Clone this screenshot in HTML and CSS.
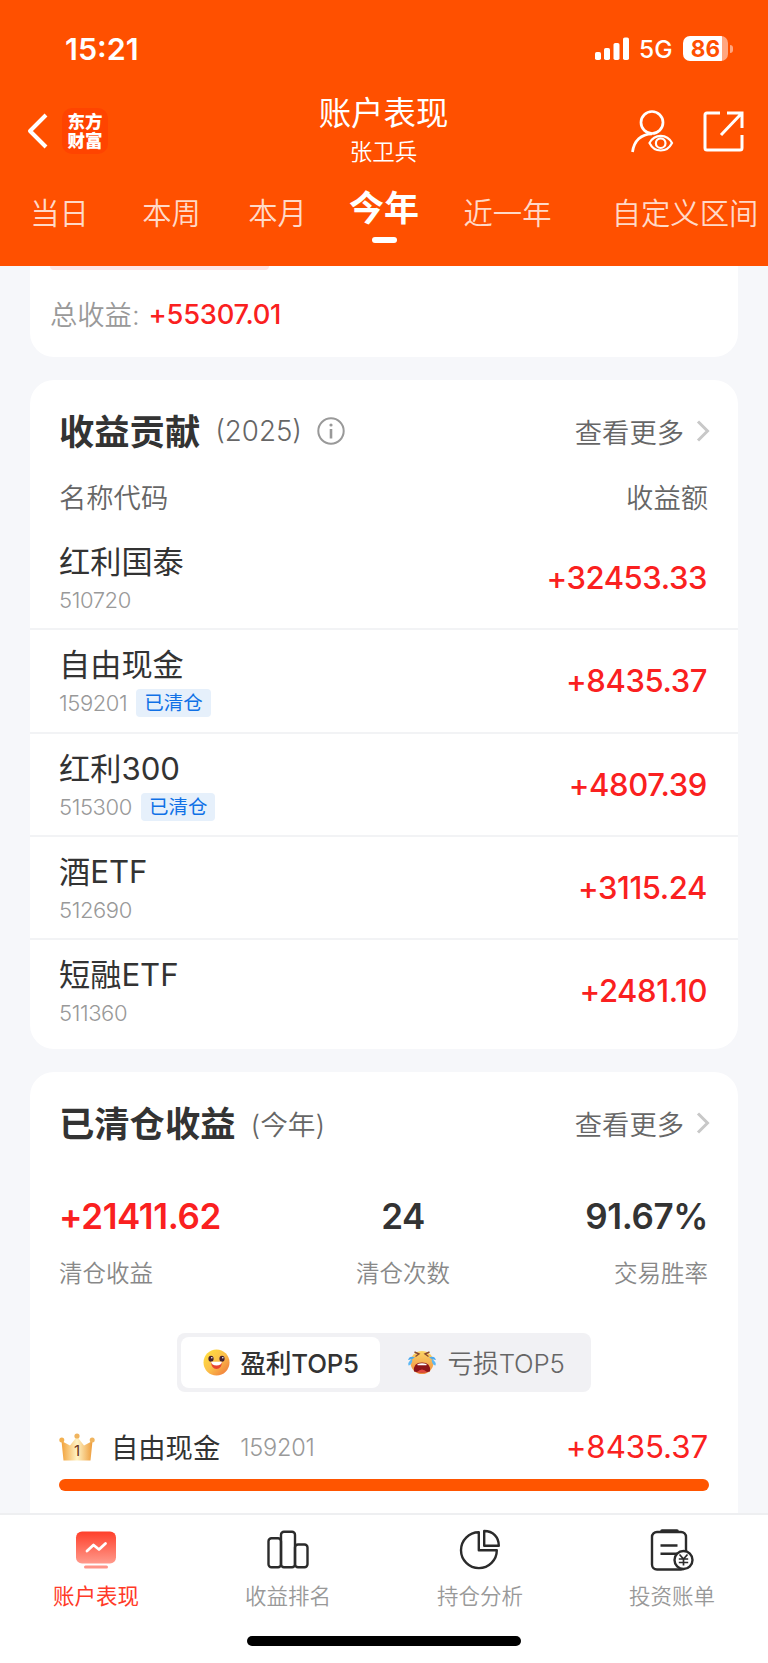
FILE: index.html
```html
<!DOCTYPE html>
<html lang="zh-CN">
<head>
    <meta charset="UTF-8">
    <meta name="viewport" content="width=device-width, initial-scale=1.0">
    <title>账户表现</title>
    <link rel="stylesheet" href="styles.css">
</head>
<body>
    <header class="header">
        <!-- 状态栏 -->
        <div class="status-bar">
            <span class="time">15:21</span>
            <div class="status-right">
                <svg class="signal" width="34" height="23" viewBox="0 0 34 23" fill="#fff">
                    <rect x="0" y="15" width="6" height="8" rx="1.8"/>
                    <rect x="9" y="11" width="6" height="12" rx="1.8"/>
                    <rect x="18.500" y="6" width="6" height="17" rx="1.800"/>
                    <rect x="28" y="0.500" width="6" height="22.500" rx="1.800"/>
                </svg>
                <span class="network">5G</span>
                <div class="battery"><span>86</span></div>
                <i class="battery-cap"></i>
            </div>
        </div>

        <!-- 标题栏 -->
        <div class="nav">
            <div class="nav-left">
                <svg width="22" height="36" viewBox="0 0 22 36" fill="none" stroke="#fff" stroke-width="4">
                    <path d="M19 2 L3 18 L19 34" stroke-linejoin="round"/>
                </svg>
                <div class="logo">东方<br>财富</div>
            </div>
            <div class="nav-title">
                <h1>账户表现</h1>
                <p>张卫兵</p>
            </div>
            <div class="nav-right">
                <svg width="44" height="44" viewBox="0 0 44 44" fill="none" stroke="#fff" stroke-width="2.700">
                    <circle cx="22" cy="13.500" r="11"/>
                    <path d="M2.500 43 C4 32 11 25 22 24.800"/>
                    <path d="M19.500 34 C24.500 24.500 37 24.500 42 34 C37 44 24.500 44 19.500 34 Z" stroke-width="2.200"/>
                    <circle cx="30.700" cy="34.200" r="4.800" stroke-width="2.200"/>
                </svg>
                <svg width="41" height="41" viewBox="0 0 41 41" fill="none" stroke="#fff" stroke-width="3">
                    <path d="M17 2 H4 Q2 2 2 4 V37 Q2 39 4 39 H37 Q39 39 39 37 V24"/>
                    <path d="M24 2 H39 V17 M38 3 L18 24"/>
                </svg>
            </div>
        </div>

        <!-- 时间区间 -->
        <nav class="range-tabs">
            <span>当日</span>
            <span>本周</span>
            <span>本月</span>
            <span class="active">今年</span>
            <span>近一年</span>
            <span>自定义区间</span>
        </nav>
    </header>

    <main class="content">
        <section class="card card-total">
            <div class="pink-pill"></div>
            <div class="total"><span>总收益:</span><b>+55307.01</b></div>
        </section>

        <!-- 收益贡献 -->
        <section class="card card-contrib">
            <div class="card-head">
                <h2>收益贡献</h2>
                <span class="sub year">(2025)</span>
                <svg class="info" width="28" height="28" viewBox="0 0 28 28" fill="none" stroke="#999">
                    <circle cx="14" cy="14" r="12.700" stroke-width="2"/>
                    <path d="M14 12 V21.500" stroke-width="2.600"/>
                    <circle cx="14" cy="8" r="1.600" fill="#999" stroke="none"/>
                </svg>
                <a class="more">查看更多
                    <svg width="14" height="22" viewBox="0 0 14 22" fill="none" stroke="#c8c8c8" stroke-width="3"><path d="M2 1.500 L11.500 11 L2 20.500"/></svg>
                </a>
            </div>
            <div class="table-head"><span>名称代码</span><span>收益额</span></div>
            <ul class="list">
                <li>
                    <div><h3>红利国泰</h3><p>510720</p></div>
                    <strong>+32453.33</strong>
                </li>
                <li>
                    <div><h3>自由现金</h3><p>159201<em class="tag">已清仓</em></p></div>
                    <strong>+8435.37</strong>
                </li>
                <li>
                    <div><h3>红利300</h3><p>515300<em class="tag">已清仓</em></p></div>
                    <strong>+4807.39</strong>
                </li>
                <li>
                    <div><h3>酒ETF</h3><p>512690</p></div>
                    <strong>+3115.24</strong>
                </li>
                <li>
                    <div><h3>短融ETF</h3><p>511360</p></div>
                    <strong>+2481.10</strong>
                </li>
            </ul>
        </section>

        <!-- 已清仓收益 -->
        <section class="card card-closed">
            <div class="card-head">
                <h2>已清仓收益</h2>
                <span class="sub">(今年)</span>
                <a class="more">查看更多
                    <svg width="14" height="22" viewBox="0 0 14 22" fill="none" stroke="#c8c8c8" stroke-width="3"><path d="M2 1.500 L11.500 11 L2 20.500"/></svg>
                </a>
            </div>
            <div class="stats">
                <div><strong class="red">+21411.62</strong><span>清仓收益</span></div>
                <div><strong>24</strong><span>清仓次数</span></div>
                <div><strong>91.67%</strong><span>交易胜率</span></div>
            </div>
            <div class="switch">
                <div class="switch-item on">
                    <svg width="27" height="27" viewBox="0 0 27 27">
                        <defs>
                            <linearGradient id="face" x1="0" y1="0" x2="1" y2="1">
                                <stop offset="0" stop-color="#ffe23c"/>
                                <stop offset="0.500" stop-color="#fbc04a"/>
                                <stop offset="1" stop-color="#ef6f3a"/>
                            </linearGradient>
                        </defs>
                        <circle cx="13.500" cy="13.500" r="13" fill="url(#face)"/>
                        <ellipse cx="8" cy="9.800" rx="2.600" ry="3" fill="#43202f"/>
                        <ellipse cx="19" cy="9.800" rx="2.600" ry="3" fill="#43202f"/>
                        <circle cx="8.800" cy="8.800" r="0.800" fill="#fff"/>
                        <circle cx="19.800" cy="8.800" r="0.800" fill="#fff"/>
                        <path d="M8 13 H19 Q18.500 20 13.500 20 Q8.500 20 8 13 Z" fill="#e8432e"/>
                        <path d="M8 12.800 H19 Q18.500 16.500 13.500 16.500 Q8.500 16.500 8 12.800 Z" fill="#fff"/>
                    </svg>
                    <span>盈利TOP5</span>
                </div>
                <div class="switch-item">
                    <svg width="30" height="25" viewBox="0 0 30 25">
                        <defs>
                            <linearGradient id="cry" x1="0" y1="0" x2="0" y2="1">
                                <stop offset="0" stop-color="#fcd668"/>
                                <stop offset="1" stop-color="#ef8b3c"/>
                            </linearGradient>
                        </defs>
                        <ellipse cx="15" cy="12.500" rx="11.500" ry="11.500" fill="url(#cry)"/>
                        <path d="M7.500 2 L12 4 L8.500 6.500 M22.500 2 L18 4 L21.500 6.500" fill="none" stroke="#8a4a30" stroke-width="1.400"/>
                        <path d="M7 21.500 Q6 12.500 15 12.500 Q24 12.500 23 21.500 Q15 23.500 7 21.500 Z" fill="#8c1418"/>
                        <path d="M10.500 14 Q15 12.500 19.500 14 V15.200 H10.500 Z" fill="#fff"/>
                        <path d="M10 22 Q15 17 20 22 Q15 23.200 10 22 Z" fill="#e2483f"/>
                        <path d="M8 7.500 Q2.500 5 1 10 Q5 9.500 8 7.500 Z M22 7.500 Q27.500 5 29 10 Q25 9.500 22 7.500 Z" fill="#4aa9ee"/>
                        <path d="M5.500 9 Q0 12 1.500 15.500 Q5 15 5.500 9 Z M24.500 9 Q30 12 28.500 15.500 Q25 15 24.500 9 Z" fill="#5cb8f5"/>
                    </svg>
                    <span>亏损TOP5</span>
                </div>
            </div>
            <div class="rank">
                <svg width="36" height="28" viewBox="0 0 36 28">
                    <defs>
                        <linearGradient id="crown" x1="0" y1="0" x2="1" y2="0">
                            <stop offset="0" stop-color="#f2a13a"/>
                            <stop offset="0.500" stop-color="#fff3c4"/>
                            <stop offset="1" stop-color="#ee9c3a"/>
                        </linearGradient>
                    </defs>
                    <path d="M2.500 8 L11 12.500 L18 3.500 L25 12.500 L33.500 8 L31.500 27.500 H4.500 Z" fill="url(#crown)"/>
                    <circle cx="2.800" cy="7" r="2.500" fill="#f3b050"/>
                    <circle cx="18" cy="3" r="2.600" fill="#f0b45e"/>
                    <circle cx="33.200" cy="7" r="2.500" fill="#f0b45e"/>
                    <text x="18" y="22.500" text-anchor="middle" class="crown-num">1</text>
                </svg>
                <span class="rank-name">自由现金</span>
                <span class="rank-code">159201</span>
                <span class="rank-value">+8435.37</span>
            </div>
            <div class="bar"><div class="bar-fill" style="width: 100%"></div></div>
        </section>
    </main>

    <!-- 底部导航 -->
    <footer class="tab-bar">
        <div class="tabs">
            <a class="tab active">
                <svg width="44" height="44" viewBox="0 0 44 44">
                    <defs>
                        <linearGradient id="screen" x1="0" y1="0" x2="0" y2="1">
                            <stop offset="0" stop-color="#ff3f2a"/>
                            <stop offset="1" stop-color="#ff9a8c"/>
                        </linearGradient>
                    </defs>
                    <rect x="2" y="3.500" width="40" height="32" rx="6" fill="url(#screen)"/>
                    <rect x="10" y="37.500" width="24" height="3" rx="1.500" fill="#ff9488"/>
                    <path d="M13 23 L19.500 17 L25 21.500 L31.500 15.500" fill="none" stroke="#fff" stroke-width="2.800" stroke-linecap="round" stroke-linejoin="round"/>
                </svg>
                <span>账户表现</span>
            </a>
            <a class="tab">
                <svg width="44" height="44" viewBox="0 0 44 44" fill="none" stroke="#2b2b2b" stroke-width="2.400">
                    <rect x="2.500" y="10.300" width="12.500" height="29" rx="3"/>
                    <rect x="15" y="3.700" width="14" height="35.600" rx="3"/>
                    <rect x="29" y="16.500" width="12.500" height="22.800" rx="3"/>
                </svg>
                <span>收益排名</span>
            </a>
            <a class="tab">
                <svg width="44" height="44" viewBox="0 0 44 44" fill="none" stroke="#2b2b2b" stroke-width="2.400" stroke-linejoin="round">
                    <path d="M20.800 4.300 A17.900 17.900 0 1 0 38.800 22.200 H20.800 Z"/>
                    <path d="M26.200 3 V17.700 H40.800 C40.800 9 35 3 26.200 3 Z"/>
                </svg>
                <span>持仓分析</span>
            </a>
            <a class="tab">
                <svg width="44" height="44" viewBox="0 0 44 44" fill="none" stroke="#2b2b2b" stroke-width="2.400">
                    <rect x="2" y="4" width="34" height="37.500" rx="5"/>
                    <path d="M12 3 H27" stroke-width="3.600" stroke-linecap="round"/>
                    <path d="M10.500 17.500 H27.500 M10.500 25.800 H27"/>
                    <circle cx="33.500" cy="32" r="9" fill="#fff"/>
                    <path d="M29.500 26.500 L33.500 31 L37.500 26.500 M33.500 31 V37.500 M28.800 31 H38.200 M28.800 34.500 H38.200" stroke-width="1.700"/>
                </svg>
                <span>投资账单</span>
            </a>
        </div>
        <div class="home-indicator"></div>
    </footer>
</body>
</html>
```
FILE: styles.css
```css
* {
    margin: 0;
    padding: 0;
    box-sizing: border-box;
}

body {
    width: 768px;
    height: 1663px;
    overflow: hidden;
    display: flex;
    flex-direction: column;
    font-family: Inter, "Noto Sans CJK SC", sans-serif;
    background-color: #f6f7fa;
    color: #333;
}

svg {
    display: block;
    flex-shrink: 0;
}

/* 顶部 */
.header {
    height: 266px;
    flex-shrink: 0;
    background-color: #ff5000;
    color: #fff;
}

.status-bar {
    height: 98px;
    padding: 0 36px 1px 65px;
    display: flex;
    align-items: center;
    justify-content: space-between;
}

.time {
    font-size: 30.5px;
    font-weight: 600;
}

.status-right {
    display: flex;
    align-items: center;
}

.network {
    margin-left: 10px;
    font-size: 24.5px;
    font-weight: 450;
    width: 33px;
}

.battery {
    margin-left: 11px;
    width: 45px;
    height: 25px;
    border-radius: 7px;
    background: linear-gradient(to right, #fff 86%, #ffa680 86%);
    color: #ff5000;
    font-size: 22.5px;
    font-weight: 700;
    line-height: 25px;
    text-align: center;
}

.battery-cap {
    width: 3px;
    height: 8px;
    margin-left: 2px;
    margin-right: -1px;
    border-radius: 0 4px 4px 0;
    background-color: #ffa680;
}

.nav {
    height: 76px;
    padding: 0 24px 0 27px;
    display: grid;
    grid-template-columns: 1fr auto 1fr;
    grid-template-rows: 76px;
    align-items: center;
}

.nav-left {
    display: flex;
    align-items: center;
    gap: 13px;
    padding-bottom: 10px;
}

.logo {
    width: 46px;
    height: 46px;
    border-radius: 10px;
    background-color: #ff4400;
    font-size: 17.5px;
    font-weight: 900;
    line-height: 19px;
    text-align: center;
    padding-top: 4px;
}

.nav-title {
    align-self: start;
    margin: -4px 4px 0 0;
    text-align: center;
}

.nav-title h1 {
    font-size: 32.4px;
    font-weight: 400;
    line-height: 40px;
}

.nav-title p {
    font-size: 22.5px;
    font-weight: 350;
    line-height: 36px;
}

.nav-right {
    display: flex;
    align-items: center;
    justify-content: flex-end;
    gap: 29px;
    padding-bottom: 10px;
}

.range-tabs {
    height: 92px;
    display: grid;
    grid-template-columns: 119px 105px 107px 106px 141px 214px;
    overflow: hidden;
    text-align: center;
    font-size: 29.3px;
    font-weight: 350;
    line-height: 80px;
    color: #ffd9c8;
    white-space: nowrap;
}

.range-tabs .active {
    position: relative;
    font-size: 35px;
    font-weight: 700;
    line-height: 69px;
    color: #fff;
}

.range-tabs .active::after {
    content: "";
    position: absolute;
    left: 41px;
    top: 63px;
    width: 25px;
    height: 6px;
    border-radius: 3px;
    background-color: #fff;
}

/* 内容区 */
.content {
    flex: 1;
    min-height: 0;
    overflow: hidden;
    padding: 0 30px;
}

.card {
    background-color: #fff;
    border-radius: 24px;
    margin-bottom: 23px;
}

.card-total {
    height: 91px;
    padding: 0 20px;
    border-radius: 0 0 24px 24px;
}

.pink-pill {
    width: 219px;
    height: 4px;
    border-radius: 0 0 6px 6px;
    background-color: #ffe6e4;
}

.total {
    display: flex;
    align-items: center;
    height: 88px;
    font-size: 27.3px;
    color: #999;
}

.total span {
    font-weight: 350;
    margin-top: -3px;
}

.total b {
    margin-left: 9px;
    font-weight: 500;
    letter-spacing: -0.25px;
    color: #fa2020;
}

.card-head {
    display: flex;
    align-items: center;
    height: 102px;
    padding: 0 28px 0 29px;
}

.card-head h2 {
    margin-top: -3px;
    font-size: 35.3px;
    font-weight: 700;
}

.sub {
    margin-left: 15px;
    font-size: 27.7px;
    font-weight: 350;
    color: #666;
}

.info {
    margin-left: 15px;
}

.more {
    margin-left: auto;
    display: flex;
    align-items: center;
    gap: 12px;
    font-size: 27.3px;
    font-weight: 350;
    color: #666;
}

.card-contrib {
    height: 669px;
}

.table-head {
    display: flex;
    justify-content: space-between;
    height: 44px;
    margin-top: -5px;
    padding: 0 30px 0 29px;
    font-size: 27.3px;
    font-weight: 350;
    line-height: 44px;
    color: #666;
}

.list {
    list-style: none;
    margin-top: 6px;
}

.list li {
    display: flex;
    justify-content: space-between;
    height: 103.3px;
    padding: 0 31px 0 29px;
    border-bottom: 2px solid #f2f3f5;
}

.list li:last-child {
    border-bottom: none;
}

.list h3 {
    margin-top: 14px;
    font-size: 31.2px;
    font-weight: 400;
    line-height: 42px;
}

.list p {
    display: flex;
    align-items: center;
    height: 34px;
    font-size: 22px;
    font-weight: 350;
    letter-spacing: -0.4px;
    color: #999;
}

.tag {
    height: 28px;
    margin-left: 9px;
    padding: 0 8px;
    border-radius: 4px;
    background-color: #e6f0fb;
    color: #0f70e6;
    font-size: 19.5px;
    font-style: normal;
    font-weight: 400;
    letter-spacing: 0;
    line-height: 28px;
}

.list strong {
    font-size: 31px;
    font-weight: 500;
    letter-spacing: -0.4px;
    line-height: 101px;
    color: #fa2020;
}

.card-closed {
    height: 500px;
    margin-bottom: 0;
}

.stats {
    display: flex;
    justify-content: space-between;
    height: 159px;
    padding: 21px 30px 0 29px;
}

.stats div {
    display: flex;
    flex-direction: column;
    align-items: center;
}

.stats div:first-child {
    align-items: flex-start;
}

.stats div:last-child {
    align-items: flex-end;
}

.stats strong {
    font-size: 35px;
    font-weight: 570;
    letter-spacing: -0.4px;
    line-height: 43px;
}

.stats .red {
    color: #fa2020;
}

.stats span {
    margin-top: 18px;
    font-size: 23.5px;
    font-weight: 350;
    line-height: 36px;
    color: #888;
}

.switch {
    display: flex;
    width: 414px;
    height: 59px;
    margin: 0 auto;
    padding: 4px;
    border-radius: 8px;
    background-color: #f1f1f4;
}

.switch-item {
    flex: 1;
    display: flex;
    align-items: center;
    justify-content: center;
    gap: 10px;
    padding-left: 5px;
    font-size: 25.8px;
    font-weight: 350;
    letter-spacing: -0.2px;
    color: #666;
}

.switch-item.on {
    flex: 0 0 199px;
    padding-left: 1px;
    border-radius: 8px;
    background-color: #fff;
    font-weight: 500;
    color: #333;
}

.switch-item span {
    margin-top: -3px;
}

.rank {
    display: flex;
    align-items: center;
    height: 56px;
    margin-top: 27px;
    padding: 0 30px 0 29px;
}

.crown-num {
    font-size: 15px;
    fill: #6a3318;
}

.rank-name {
    margin-left: 16px;
    margin-top: -2px;
    font-size: 27.3px;
}

.rank-code {
    margin-left: 20px;
    font-size: 23.5px;
    font-weight: 350;
    letter-spacing: -0.2px;
    color: #999;
}

.rank-value {
    margin-left: auto;
    font-size: 31.3px;
    font-weight: 370;
    letter-spacing: -0.1px;
    color: #fa2020;
}

.bar {
    height: 12px;
    margin: 4px 29px 0;
}

.bar-fill {
    height: 12px;
    border-radius: 6px;
    background-color: #ff5500;
}

/* 底部 */
.tab-bar {
    height: 150px;
    flex-shrink: 0;
    border-top: 2px solid #eeeff1;
    background-color: #fff;
}

.tabs {
    display: grid;
    grid-template-columns: repeat(4, 1fr);
    height: 121px;
}

.tab {
    display: flex;
    flex-direction: column;
    align-items: center;
    padding-top: 13px;
    font-size: 21.5px;
    font-weight: 350;
    line-height: 32px;
    color: #999;
}

.tab span {
    margin-top: 8px;
}

.tab.active {
    font-weight: 400;
    color: #ff3a28;
}

.home-indicator {
    width: 274px;
    height: 10px;
    margin: 0 auto;
    border-radius: 5px;
    background-color: #000;
}
```
